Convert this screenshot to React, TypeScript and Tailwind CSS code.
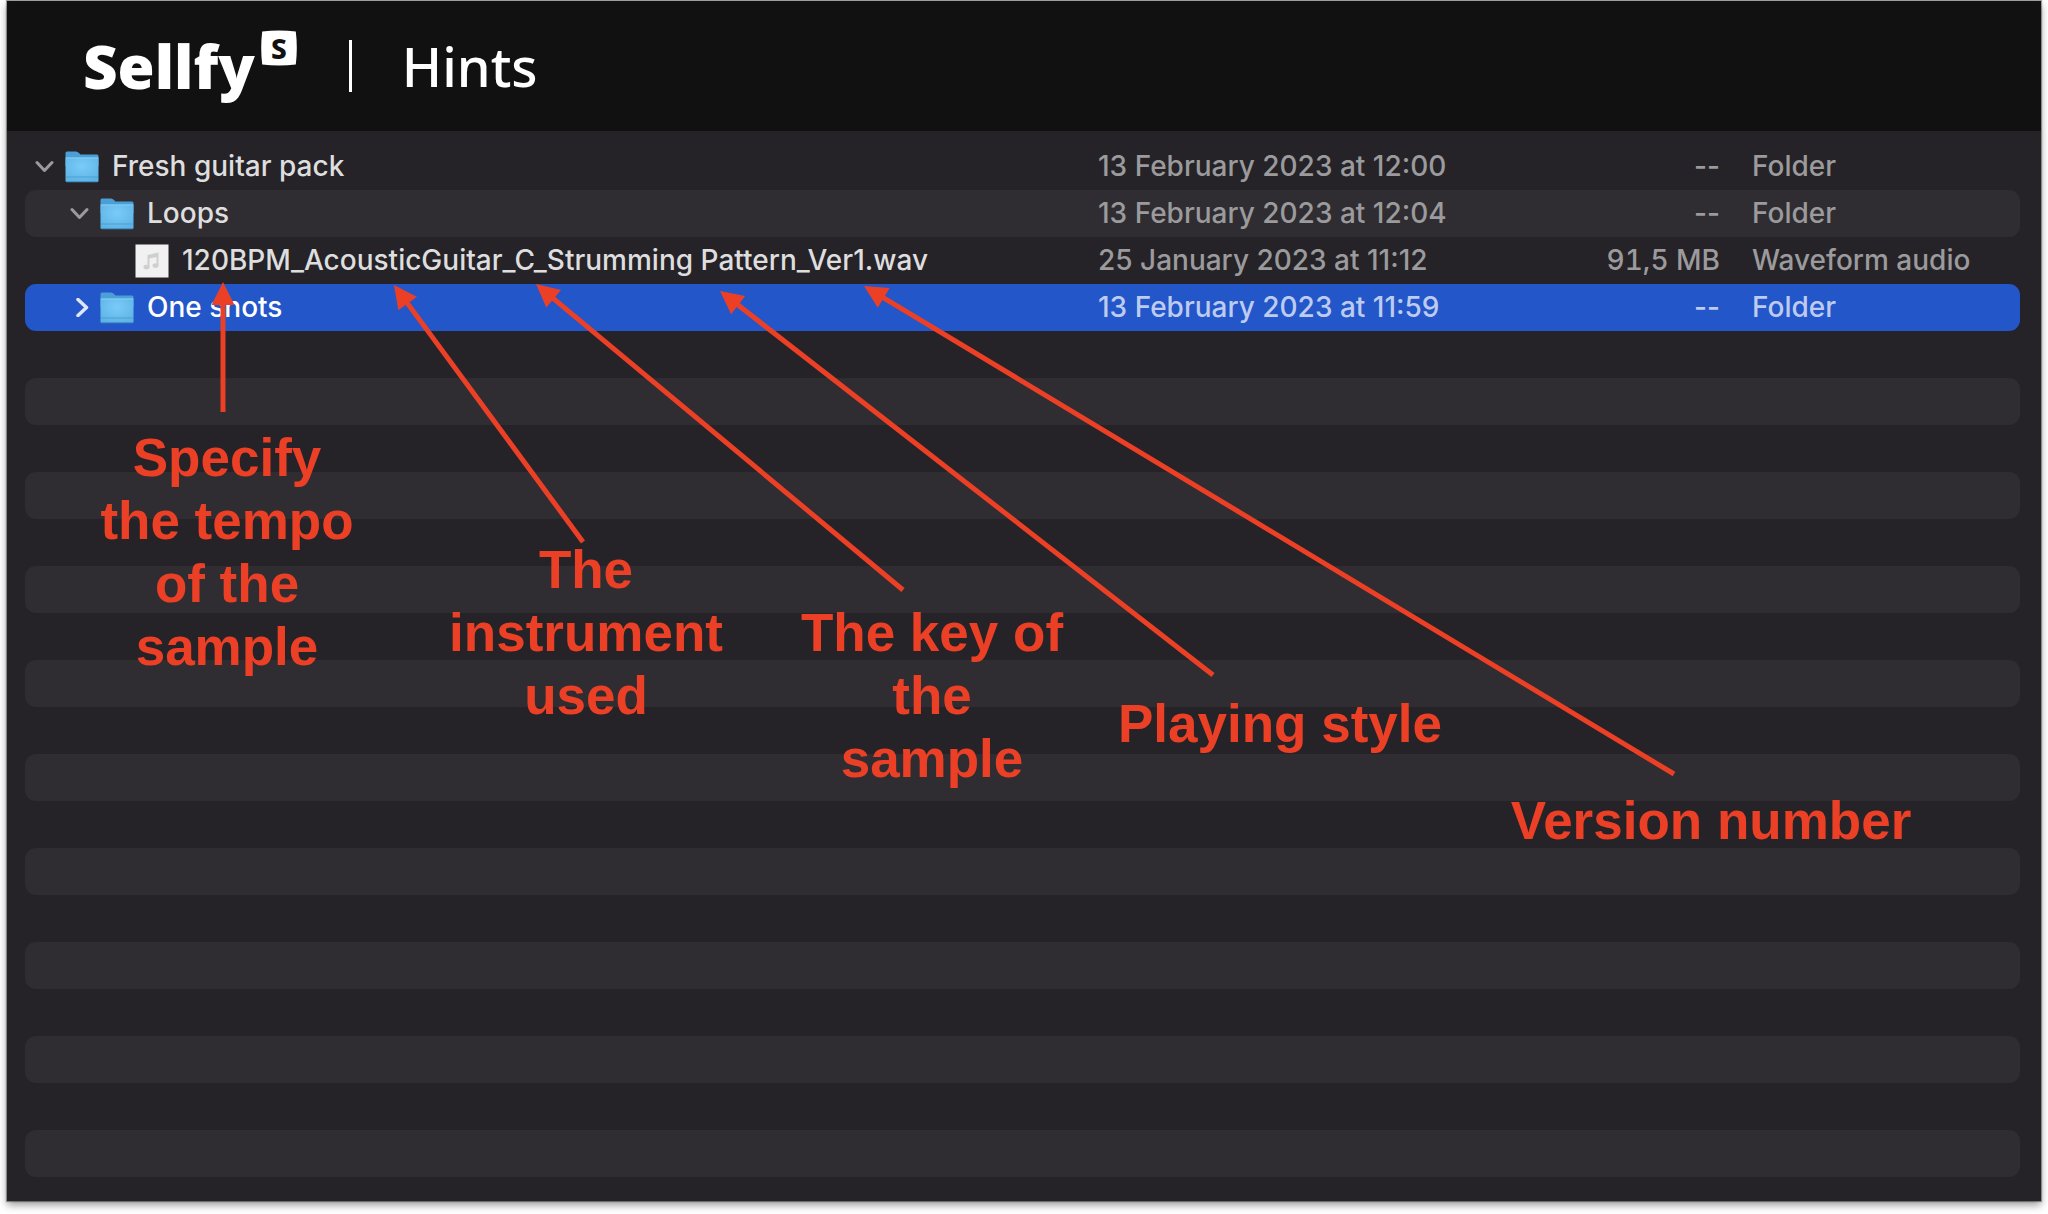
type Entry = {
    name: string
    depth: number
    kind: string
    date: string
    size: string
    open?: boolean
    selected?: boolean
}

const entries: Entry[] = [
    { name: "Fresh guitar pack", depth: 0, kind: "Folder", date: "13 February 2023 at 12:00", size: "--", open: true },
    { name: "Loops", depth: 1, kind: "Folder", date: "13 February 2023 at 12:04", size: "--", open: true },
    { name: "120BPM_AcousticGuitar_C_Strumming Pattern_Ver1.wav", depth: 2, kind: "Waveform audio", date: "25 January 2023 at 11:12", size: "91,5 MB" },
    { name: "One shots", depth: 1, kind: "Folder", date: "13 February 2023 at 11:59", size: "--", selected: true },
]

const emptyRows = Array.from({ length: 18 }, (_, i) => i)

const indents = ["pl-[10px]", "pl-[45px]", "pl-[80px]"]

// tip and tail of every arrow, measured from the top left of the file list
const arrows = [
    { tip: [216, 151], tail: [216, 281] },
    { tip: [387, 154], tail: [576, 411] },
    { tip: [529, 153], tail: [896, 459] },
    { tip: [713, 160], tail: [1206, 544] },
    { tip: [857, 155], tail: [1667, 643] },
]

export default function App() {
    return (
        <div className="bg-white px-[7px] pt-px pb-[13px] font-[Inter,'Liberation_Sans',sans-serif]">
            <main className="bg-[#252327] shadow-[0_0_1px_1px_rgba(0,0,0,0.35),0_4px_8px_rgba(0,0,0,0.4)]">
                <Header />
                <div className="relative overflow-hidden pt-3 pr-[21px] pb-6 pl-[18px]">
                    <FileList />
                    <Annotations />
                </div>
            </main>
        </div>
    )
}

function Header() {
    return (
        <header className="flex h-[130px] items-center bg-[#111111] pl-[76px] font-['Noto_Sans','Open_Sans',sans-serif] text-white">
            <a href="#" className="flex items-center gap-1.5">
                <span className="text-[60px] leading-[72px] font-black">Sellfy</span>
                <span className="relative mb-9 flex h-9 w-9 items-center justify-center">
                    <svg className="absolute inset-0 h-9 w-9" viewBox="0 0 36 36" fill="currentColor">
                        <path d="M1.200 1.500 Q18 -0.500 34.800 1.500 Q36.800 18 34.800 34.500 Q18 36.500 1.200 34.500 Q-0.800 18 1.200 1.500Z" />
                    </svg>
                    <span className="relative text-[28px] leading-9 font-extrabold text-[#111111]">S</span>
                </span>
            </a>
            <span className="ml-[52px] h-[52px] w-[3px] bg-white" />
            <h1 className="ml-[50px] text-[54px] leading-[72px] font-medium">Hints</h1>
        </header>
    )
}

function FileList() {
    return (
        <table className="w-full table-fixed border-separate border-spacing-0 text-left text-[28px] leading-[47px] font-medium whitespace-nowrap">
            <colgroup>
                <col />
                <col className="w-[422px]" />
                <col className="w-[232px]" />
                <col className="w-[268px]" />
            </colgroup>
            <tbody>
                {entries.map((entry) => (
                    <FileRow key={entry.name} entry={entry} />
                ))}
                {emptyRows.map((row) => (
                    <tr key={row} className="odd:bg-transparent even:[&>td]:bg-[#2f2d31]">
                        <td colSpan={4} className="h-[47px] rounded-[11px] p-0" />
                    </tr>
                ))}
            </tbody>
        </table>
    )
}

function FileRow({ entry }: { entry: Entry }) {
    const isFolder = entry.kind === "Folder"
    const cell = entry.selected
        ? "h-[47px] p-0 bg-[#2356c9] text-[#bdcbef]"
        : entry.name === "Loops"
            ? "h-[47px] p-0 bg-[#2f2d31] text-[#9b9a9c]"
            : "h-[47px] p-0 text-[#9b9a9c]"
    return (
        <tr>
            <td className={`${cell} rounded-l-[11px]`}>
                <div className={`flex items-center ${indents[entry.depth]}`}>
                    {isFolder ? (
                        <button
                            type="button"
                            aria-label={`Toggle ${entry.name}`}
                            className={`mr-[11px] flex w-[19px] justify-center ${entry.selected ? "text-[#dfe6f7]" : "text-[#9b9a9c]"}`}
                        >
                            {entry.open ? <ChevronDown /> : <ChevronRight />}
                        </button>
                    ) : (
                        <span className="mr-[11px] w-[19px]" />
                    )}
                    {isFolder ? <FolderIcon /> : <AudioIcon />}
                    <span className={`ml-[13px] ${entry.selected ? "text-white" : "text-[#dededf]"}`}>{entry.name}</span>
                </div>
            </td>
            <td className={cell}>{entry.date}</td>
            <td className={`${cell} pr-8! text-right ${isFolder ? "" : "tabular-nums"}`}>{entry.size}</td>
            <td className={`${cell} rounded-r-[11px]`}>{entry.kind}</td>
        </tr>
    )
}

function Annotations() {
    return (
        <div className="pointer-events-none absolute inset-0 text-center font-['Liberation_Sans',Arial,sans-serif] text-[53px] leading-[63px] font-bold text-[#eb4026]">
            <svg className="absolute inset-0 h-full w-full" fill="currentColor" stroke="none">
                {arrows.map(({ tip, tail }) => {
                    const dx = tail[0] - tip[0]
                    const dy = tail[1] - tip[1]
                    const angle = (Math.atan2(dy, dx) * 180) / Math.PI
                    return (
                        <g key={tip[0]} transform={`translate(${tip[0]} ${tip[1]}) rotate(${angle})`}>
                            <path d="M0 0 L23 -11.500 V11.500Z" />
                            <path d={`M20 0 H${Math.hypot(dx, dy)}`} stroke="currentColor" strokeWidth="5" />
                        </g>
                    )
                })}
            </svg>
            <p className="absolute top-[295px] left-[80px] w-[280px]">Specify the tempo of the sample</p>
            <p className="absolute top-[407px] left-[429px] w-[300px]">The instrument used</p>
            <p className="absolute top-[470px] left-[790px] w-[270px]">The key of the sample</p>
            <p className="absolute top-[561px] left-[1093px] w-[360px]">Playing style</p>
            <p className="absolute top-[658px] left-[1484px] w-[440px]">Version number</p>
        </div>
    )
}

function ChevronDown() {
    return (
        <svg className="h-[19px] w-[19px]" viewBox="0 0 19 19" fill="none" stroke="currentColor" strokeWidth="3" strokeLinecap="round" strokeLinejoin="round">
            <path d="M2 5.500 L9.500 13.500 L17 5.500" />
        </svg>
    )
}

function ChevronRight() {
    return (
        <svg className="h-[19px] w-[19px]" viewBox="0 0 19 19" fill="none" stroke="currentColor" strokeWidth="3.500" strokeLinecap="round" strokeLinejoin="round">
            <path d="M8 1.500 L16.500 9.500 L8 17.500" />
        </svg>
    )
}

function FolderIcon() {
    return (
        <svg className="h-8 w-[34px] shrink-0" viewBox="0 0 34 32">
            <defs>
                <radialGradient id="folder-front" cx="0.5" cy="0.35" r="0.7">
                    <stop offset="0" stopColor="#7accf8" />
                    <stop offset="1" stopColor="#5db3e6" />
                </radialGradient>
            </defs>
            <path d="M0.500 2 Q0.500 0.500 2 0.500 H11 Q12.500 0.500 14 2 L15.500 3.500 H32 Q33.500 3.500 33.500 5 V15 H0.500Z" fill="#4c9fd6" />
            <path d="M0.500 6.500 H33.500 V29.500 Q33.500 31 32 31 H2 Q0.500 31 0.500 29.500Z" fill="url(#folder-front)" />
            <path d="M1 7 H33" stroke="#83cff5" strokeWidth="1" />
            <path d="M1 26 H33" stroke="#4d9fd2" strokeWidth="1" />
            <path d="M1.500 30.800 H32.500" stroke="#3c86bb" strokeWidth="1" />
        </svg>
    )
}

function AudioIcon() {
    return (
        <svg className="h-[34px] w-[34px] shrink-0" viewBox="0 0 34 34">
            <rect x="0.500" y="0.500" width="33" height="33" fill="#f1f1f1" />
            <g fill="#cfcfcf">
                <path d="M12.500 11 L23.500 8.500 V21.500 H21.500 V13 L14.500 14.600 V23 H12.500Z" />
                <ellipse cx="11.500" cy="23" rx="3" ry="2.300" />
                <ellipse cx="20.500" cy="21.500" rx="3" ry="2.300" />
            </g>
        </svg>
    )
}
